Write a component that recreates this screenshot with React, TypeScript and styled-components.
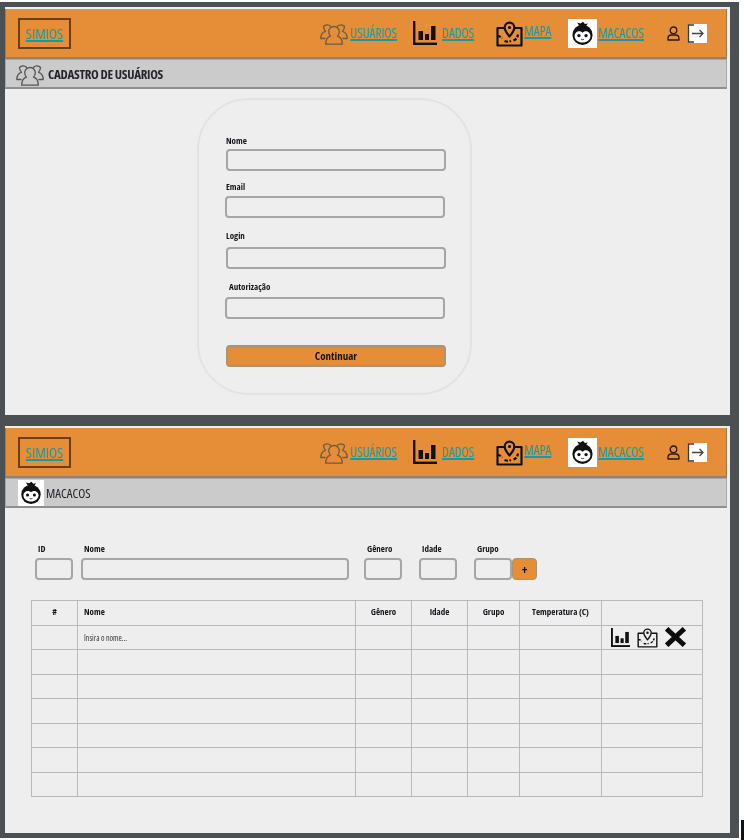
import React from 'react';
import styled, { createGlobalStyle } from 'styled-components';

const ORANGE = '#e58e37';
const TEAL = '#159ba3';
const FONT = '"Open Sans", "Liberation Sans", Arial, sans-serif';

const GlobalStyle = createGlobalStyle`
  html, body {
    margin: 0;
    padding: 0;
    background: #fff;
    overflow: hidden;
  }
  body {
    font-family: ${FONT};
    font-stretch: 75%;
  }
  button {
    font-stretch: 75%;
  }
`;

const Page = styled.div`
  position: relative;
  width: 744px;
  height: 840px;
  padding-top: 2px;
  box-sizing: border-box;
  filter: blur(0.4px);
`;

const Frame = styled.div`
  width: 739px;
  height: 836px;
  box-sizing: border-box;
  padding: 5px 9px 5px 5px;
  background: #4b5053;
  display: flex;
  flex-direction: column;
  gap: 11px;
`;

const Corner = styled.div`
  position: absolute;
  right: 0;
  bottom: 0;
  width: 3px;
  height: 20px;
  background: #111;
`;

const Panel = styled.section<{ $height: number }>`
  height: ${(p) => p.$height}px;
  background: #eeeeee;
  padding: 2px 3px 0 0;
  box-sizing: border-box;
  display: flex;
  flex-direction: column;
`;

const Header = styled.header`
  height: 50px;
  flex: none;
  box-sizing: border-box;
  background: ${ORANGE};
  border: 1px solid #a07a50;
  border-top: none;
  border-bottom: 2px solid #8e8272;
  padding: 0 19px 0 12px;
  display: flex;
  align-items: center;
  justify-content: space-between;
`;

const Logo = styled.div`
  width: 53px;
  height: 31px;
  box-sizing: border-box;
  border: 2px solid #68401a;
  display: flex;
  align-items: center;
  justify-content: center;
`;

const NavLink = styled.a<{ $size?: number }>`
  color: ${TEAL};
  font-size: ${(p) => p.$size ?? 13.5}px;
  letter-spacing: -0.1px;
  text-decoration: underline;
  text-decoration-thickness: 2px;
  display: inline-block;
  white-space: nowrap;
`;

const Nav = styled.nav`
  display: flex;
  align-items: center;
  height: 100%;
`;

const NavItem = styled.div<{ $left: number; $gap: number; $raise?: number }>`
  display: flex;
  align-items: center;
  gap: ${(p) => p.$gap}px;
  margin-left: ${(p) => p.$left}px;

  a {
    transform: translateY(${(p) => p.$raise ?? 0}px);
  }
`;

const SubHeader = styled.div<{ $pad: number; $gap: number }>`
  height: 30px;
  flex: none;
  box-sizing: border-box;
  background: #cbcbcb;
  border: 1px solid #a8a8a8;
  border-bottom: 2px solid #8f8f8f;
  padding-left: ${(p) => p.$pad}px;
  display: flex;
  align-items: center;
  gap: ${(p) => p.$gap}px;
`;

const SubTitle = styled.h2<{ $bold?: boolean }>`
  margin: 0;
  font-size: 13px;
  letter-spacing: ${(p) => (p.$bold ? -0.3 : 0)}px;
  font-weight: ${(p) => (p.$bold ? 700 : 400)};
  color: #25252e;
  white-space: nowrap;
`;

const MonkeyBox = styled.span<{ $size: number }>`
  width: ${(p) => p.$size}px;
  height: ${(p) => p.$size}px;
  background: #fff;
  display: inline-flex;
  align-items: center;
  justify-content: center;
  flex: none;
`;

const FormBody = styled.div`
  flex: 1;
  padding: 9px 0 0 192px;
`;

const Card = styled.form`
  width: 275px;
  height: 297px;
  box-sizing: border-box;
  border: 2px solid #e3e3e3;
  border-radius: 52px;
  padding: 35px 0 0 27px;
  display: flex;
  flex-direction: column;
`;

const Label = styled.label<{ $left?: number; $top?: number }>`
  display: block;
  font-size: 9px;
  line-height: 11px;
  font-weight: 700;
  color: #15151c;
  margin-left: ${(p) => p.$left ?? 0}px;
  margin-top: ${(p) => p.$top ?? 0}px;
  white-space: nowrap;
`;

const TextInput = styled.input<{ $width: number; $left?: number; $top?: number }>`
  display: block;
  width: ${(p) => p.$width}px;
  height: 22px;
  box-sizing: border-box;
  margin: ${(p) => p.$top ?? 3}px 0 0 ${(p) => p.$left ?? 0}px;
  padding: 0;
  background: #eeeeee;
  border: 2px solid #a6a6a6;
  border-radius: 4px;
  outline: none;
`;

const SubmitButton = styled.button`
  width: 220px;
  height: 22px;
  margin-top: 26px;
  padding: 0 0 2px;
  box-sizing: border-box;
  background: ${ORANGE};
  border: 2px solid #a7947c;
  border-radius: 4px;
  font-family: ${FONT};
  font-size: 11px;
  font-weight: 700;
  color: #1a1208;
`;

const TableBody = styled.div`
  flex: 1;
  padding: 35px 0 0 26px;
`;

const FieldRow = styled.div`
  display: flex;
  align-items: flex-end;
  margin-left: 4px;
`;

const Field = styled.div<{ $left?: number }>`
  margin-left: ${(p) => p.$left ?? 0}px;
`;

const FieldLabel = styled(Label)`
  margin-left: 3px;
  margin-bottom: 4px;
`;

const AddButton = styled.button`
  width: 25px;
  height: 22px;
  box-sizing: border-box;
  padding: 0;
  background: ${ORANGE};
  border: 1px solid #a9946f;
  border-radius: 4px;
  font-family: ${FONT};
  font-size: 12px;
  font-weight: 700;
  color: #1a1208;
`;

const Table = styled.table`
  width: 671px;
  margin-top: 20px;
  border-collapse: collapse;
  table-layout: fixed;
  font-size: 9px;
  color: #15151c;

  th, td {
    border: 1px solid #b9b9b9;
    padding: 0;
    height: 24.5px;
    box-sizing: border-box;
  }

  th {
    font-weight: 700;
    text-align: center;
    padding-bottom: 2px;
  }

  th.left, td.left {
    text-align: left;
    padding-left: 6px;
  }

  td.left {
    font-size: 8px;
    color: #333;
  }
`;

const Actions = styled.div`
  display: flex;
  align-items: center;
  gap: 7px;
  padding-left: 9px;
`;

const UsersIcon = ({ color = '#6e5a45' }: { color?: string }) => (
  <svg width="28" height="24" viewBox="0 0 28 24" fill="none" stroke={color} strokeWidth="1.300" strokeLinejoin="round" strokeLinecap="round">
    <path d="M10.500 5.200A4.700 4.700 0 0 0 3.500 5.500c0 2 .6 3.500 2 4.800C3 11 .8 13.500.8 17.500H5" />
    <path d="M17.500 5.200a4.700 4.700 0 0 1 7 .3c0 2-.6 3.500-2 4.800 2.500.7 4.700 3.200 4.700 7.200H23" />
    <path d="M10.500 15.200c-1.200-1.100-1.800-2.500-1.800-4.400a5.300 5.300 0 0 1 10.600 0c0 1.900-.6 3.300-1.800 4.400 2.800.8 4.800 3.500 4.800 8H5.700c0-4.500 2-7.200 4.800-8Z" />
  </svg>
);

const ChartIcon = ({ size = 24 }: { size?: number }) => (
  <svg width={size} height={size} viewBox="0 0 24 24" fill="#111">
    <rect x="0" y="0" width="2.400" height="24" />
    <rect x="0" y="21.600" width="24" height="2.400" />
    <rect x="5.500" y="10" width="4.500" height="9" />
    <rect x="12" y="13" width="4" height="6" />
    <rect x="18" y="5" width="4.500" height="14" />
  </svg>
);

const MapIcon = ({ size = 27, stroke = 2.200 }: { size?: number; stroke?: number }) => (
  <svg width={size} height={size} viewBox="0 0 27 27" fill="none" stroke="#111" strokeWidth={stroke} strokeLinejoin="round">
    <path d="M8 8H1.500v17.500h24V8H19" />
    <path d="M13.500 16.500c-3-3.500-4.800-6-4.800-9a4.800 4.800 0 0 1 9.600 0c0 3-1.800 5.500-4.800 9Z" />
    <circle cx="13.500" cy="7.500" r="1.600" fill="#111" stroke="none" />
    <path d="M1.500 16c2 0 3.500 1 4.500 2.500M8.500 21c2 .8 4.500.8 6.500 0M17.500 20.500c2.500-1 4-3 4.500-6" strokeDasharray="3.500 1.500" />
  </svg>
);

const MonkeyIcon = ({ size = 25 }: { size?: number }) => (
  <svg width={size} height={size} viewBox="0 0 26 26">
    <path d="M9.500 5 7.500 1.500l3.500 1L13.500.8 15.500 3l3-.5-2 3Z" fill="#111" />
    <circle cx="13" cy="14.500" r="10.500" fill="#111" />
    <path d="M4.800 15.500c0-3 2.500-4.800 4.700-4.800 1.500 0 2.800.6 3.500 1.600.7-1 2-1.600 3.500-1.600 2.200 0 4.700 1.800 4.700 4.800 0 4-3.700 6.800-8.200 6.800s-8.200-2.800-8.200-6.800Z" fill="#fff" />
    <circle cx="9.300" cy="15.200" r="1.700" fill="#111" />
    <circle cx="16.700" cy="15.200" r="1.700" fill="#111" />
    <path d="M11.500 19c1 .5 2 .5 3 0" stroke="#111" strokeWidth="0.800" fill="none" />
  </svg>
);

const PersonIcon = () => (
  <svg width="13" height="15" viewBox="0 0 13 15" fill="none" stroke="#2a1a08" strokeWidth="1.300">
    <circle cx="6.500" cy="4.300" r="3.300" />
    <path d="M1 14v-1.500c0-2 1.500-3.500 3.500-3.500h4c2 0 3.500 1.500 3.500 3.500V14Z" strokeLinejoin="round" />
  </svg>
);

const LogoutIcon = () => (
  <svg width="20" height="19" viewBox="0 0 20 19">
    <rect x="2" y="0" width="18" height="19" fill="#fff" />
    <path d="M7 1H1.500v17H7" fill="none" stroke="#3a3a3a" strokeWidth="1.300" />
    <path d="M5 9.500h11M12.500 6l3.500 3.500-3.500 3.500" fill="none" stroke="#444" strokeWidth="1.300" />
  </svg>
);

const CloseIcon = () => (
  <svg width="21" height="20" viewBox="0 0 21 20">
    <path d="M3.500 3.500l14 13M17.500 3.500l-14 13" stroke="#0c0c0c" strokeWidth="5" strokeLinecap="square" />
  </svg>
);

const TopBar = () => (
  <Header>
    <Logo>
      <NavLink href="#" $size={15}>SIMIOS</NavLink>
    </Logo>
    <Nav>
      <NavItem $left={0} $gap={2}>
        <UsersIcon />
        <NavLink href="#">USUÁRIOS</NavLink>
      </NavItem>
      <NavItem $left={16} $gap={5}>
        <ChartIcon />
        <NavLink href="#">DADOS</NavLink>
      </NavItem>
      <NavItem $left={22} $gap={1} $raise={-2}>
        <MapIcon />
        <NavLink href="#">MAPA</NavLink>
      </NavItem>
      <NavItem $left={17} $gap={1}>
        <MonkeyBox $size={29}><MonkeyIcon /></MonkeyBox>
        <NavLink href="#">MACACOS</NavLink>
      </NavItem>
      <NavItem $left={23} $gap={7}>
        <PersonIcon />
        <LogoutIcon />
      </NavItem>
    </Nav>
  </Header>
);

const columns = [46, 278, 56, 56, 52, 82, 101];
const headers = ['#', 'Nome', 'Gênero', 'Idade', 'Grupo', 'Temperatura (C)', ''];
const emptyRows = [1, 2, 3, 4, 5, 6];

export default function App() {
  return (
    <>
      <GlobalStyle />
      <Page>
        <Frame>
          <Panel $height={408}>
            <TopBar />
            <SubHeader $pad={10} $gap={4}>
              <UsersIcon color="#555" />
              <SubTitle $bold>CADASTRO DE USUÁRIOS</SubTitle>
            </SubHeader>
            <FormBody>
              <Card>
                <Label>Nome</Label>
                <TextInput $width={220} />
                <Label $top={10}>Email</Label>
                <TextInput $width={220} $left={-1} $top={4} />
                <Label $top={12}>Login</Label>
                <TextInput $width={220} $top={6} />
                <Label $left={3} $top={12}>Autorização</Label>
                <TextInput $width={220} $left={-1} $top={5} />
                <SubmitButton type="button">Continuar</SubmitButton>
              </Card>
            </FormBody>
          </Panel>
          <Panel $height={407}>
            <TopBar />
            <SubHeader $pad={12} $gap={2}>
              <MonkeyBox $size={26}><MonkeyIcon size={24} /></MonkeyBox>
              <SubTitle>MACACOS</SubTitle>
            </SubHeader>
            <TableBody>
              <FieldRow>
                <Field>
                  <FieldLabel>ID</FieldLabel>
                  <TextInput $width={38} $top={0} />
                </Field>
                <Field $left={8}>
                  <FieldLabel $left={0}>Nome</FieldLabel>
                  <TextInput $width={268} $top={0} />
                </Field>
                <Field $left={15}>
                  <FieldLabel>Gênero</FieldLabel>
                  <TextInput $width={38} $top={0} />
                </Field>
                <Field $left={17}>
                  <FieldLabel>Idade</FieldLabel>
                  <TextInput $width={38} $top={0} />
                </Field>
                <Field $left={17}>
                  <FieldLabel>Grupo</FieldLabel>
                  <TextInput $width={38} $top={0} />
                </Field>
                <AddButton type="button">+</AddButton>
              </FieldRow>
              <Table>
                <colgroup>
                  {columns.map((w, i) => (
                    <col key={i} style={{ width: w }} />
                  ))}
                </colgroup>
                <thead>
                  <tr>
                    {headers.map((h) => (
                      <th key={h} className={h === 'Nome' ? 'left' : undefined}>{h}</th>
                    ))}
                  </tr>
                </thead>
                <tbody>
                  <tr>
                    <td />
                    <td className="left">Insira o nome...</td>
                    <td />
                    <td />
                    <td />
                    <td />
                    <td>
                      <Actions>
                        <ChartIcon size={19} />
                        <MapIcon size={21} stroke={1.8} />
                        <CloseIcon />
                      </Actions>
                    </td>
                  </tr>
                  {emptyRows.map((r) => (
                    <tr key={r}>
                      {headers.map((h) => (
                        <td key={h} />
                      ))}
                    </tr>
                  ))}
                </tbody>
              </Table>
            </TableBody>
          </Panel>
        </Frame>
        <Corner />
      </Page>
    </>
  );
}
